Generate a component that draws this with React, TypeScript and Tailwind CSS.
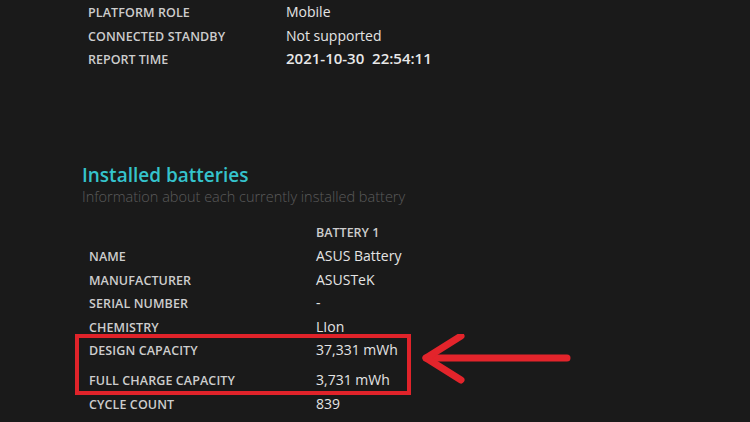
const SUMMARY = [
  { label: "PLATFORM ROLE", value: "Mobile" },
  { label: "CONNECTED STANDBY", value: "Not supported" },
];

const BATTERY_ROWS = [
  { label: "NAME", value: "ASUS Battery" },
  { label: "MANUFACTURER", value: "ASUSTeK" },
  { label: "SERIAL NUMBER", value: "-" },
  { label: "CHEMISTRY", value: "LIon" },
];

const font = { fontFamily: '"Open Sans", "Noto Sans", sans-serif' };

function Row({ label, value, labelWidth, className = "" }: { label: string; value: string; labelWidth: string; className?: string }) {
  return (
    <div className={`flex items-baseline h-[23.5px] leading-[23.5px] ${className}`}>
      <div className={`${labelWidth} shrink-0 text-[12.5px] font-semibold text-[#cdcdcd] tracking-[0.1px]`}>{label}</div>
      <div className="text-[14px] text-[#e4e4e4]">{value}</div>
    </div>
  );
}

export default function App() {
  return (
    <div className="w-[750px] h-[422px] overflow-hidden bg-[#1a1a1a]" style={font}>
      <div className="pl-[88px]">
        {SUMMARY.map((r) => (
          <Row key={r.label} label={r.label} value={r.value} labelWidth="w-[198px]" />
        ))}
        <div className="flex items-baseline h-[23.5px] leading-[23.5px]">
          <div className="w-[198px] shrink-0 text-[12.5px] font-semibold text-[#cdcdcd]">REPORT TIME</div>
          <div className="text-[15px] font-semibold text-[#e8e8e8] whitespace-pre">2021-10-30  22:54:11</div>
        </div>
      </div>

      <div className="mt-[92px] pl-[82px]">
        <h2 className="text-[19px] leading-[24px] font-semibold text-[#35c3cc]">Installed batteries</h2>
        <p className="text-[14.5px] leading-[20px] font-light text-[#5b5b5b]">Information about each currently installed battery</p>
      </div>

      <div className="mt-[14px] pl-[89px]">
        <div className="flex items-baseline h-[23.5px] leading-[23.5px]">
          <div className="w-[227px] shrink-0" />
          <div className="text-[12.5px] font-semibold text-[#cdcdcd]">BATTERY 1</div>
        </div>
        {BATTERY_ROWS.map((r) => (
          <Row key={r.label} label={r.label} value={r.value} labelWidth="w-[227px]" />
        ))}

        <div className="relative">
          <Row label="DESIGN CAPACITY" value="37,331 mWh" labelWidth="w-[227px]" className="h-[24px]" />
          <Row label="FULL CHARGE CAPACITY" value="3,731 mWh" labelWidth="w-[227px]" className="h-[24px] mt-[6px]" />
          <div className="pointer-events-none absolute left-[-14px] top-[-4px] w-[336px] h-[61px] border-[4px] border-[#e0232a]" />
          <svg className="pointer-events-none absolute left-[330px] top-[-4px]" width="160" height="61" viewBox="0 0 160 61">
            <g stroke="#e3242b" strokeWidth="7" strokeLinecap="round" strokeLinejoin="round" fill="none">
              <path d="M7 24 H148" />
              <path d="M42 2 L7 24 L42 46" />
            </g>
          </svg>
        </div>

        <Row label="CYCLE COUNT" value="839" labelWidth="w-[227px]" className="h-[24px]" />
      </div>
    </div>
  );
}
